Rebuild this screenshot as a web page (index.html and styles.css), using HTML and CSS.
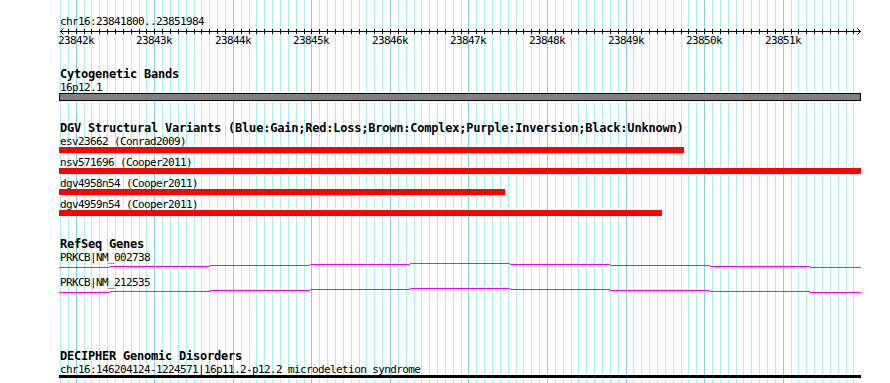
FILE: index.html
```html
<!DOCTYPE html>
<html lang="en">
<head>
<meta charset="UTF-8">
<title>chr16:23841800..23851984</title>
<link rel="stylesheet" href="styles.css">
</head>
<body>
<div class="page">
    <svg class="grid" id="grid" width="890" height="383"></svg>
    <div class="tracks">
        <div class="ruler">
            <div class="label">chr16:23841800..23851984</div>
            <svg class="axis" id="axis" width="803" height="6">
                <rect x="1" y="4" width="801" height="1" fill="#000"/>
                <path d="M1.5 4.5L4.5 1.5M1.5 4.5L4.5 7.5M801.5 4.5L798.5 1.5M801.5 4.5L798.5 7.5" stroke="#000" stroke-width="1" fill="none"/>
            </svg>
            <div class="ticks" id="ticks"></div>
        </div>

        <div class="track">
            <div class="title">Cytogenetic Bands</div>
            <div class="label">16p12.1</div>
            <div class="band"></div>
        </div>

        <div class="track">
            <div class="title">DGV Structural Variants (Blue:Gain;Red:Loss;Brown:Complex;Purple:Inversion;Black:Unknown)</div>
            <div class="features">
                <div class="feature">
                    <div class="label">esv23662 (Conrad2009)</div>
                    <div class="bar" style="width:625px"></div>
                </div>
                <div class="feature">
                    <div class="label">nsv571696 (Cooper2011)</div>
                    <div class="bar" style="width:802px"></div>
                </div>
                <div class="feature">
                    <div class="label">dgv4958n54 (Cooper2011)</div>
                    <div class="bar" style="width:446px"></div>
                </div>
                <div class="feature">
                    <div class="label">dgv4959n54 (Cooper2011)</div>
                    <div class="bar" style="width:603px"></div>
                </div>
            </div>
        </div>

        <div class="track genes">
            <div class="title">RefSeq Genes</div>
            <div class="features">
                <div class="feature">
                    <div class="label">PRKCB|NM_002738</div>
                    <svg class="hat" width="803" height="5"><path d="M0 4.5H51M51 3.5H151M151 2.5H251M251 1.5H351M351 .5H451M451 1.5H551M551 2.5H651M651 3.5H751M751 4.5H802"/></svg>
                </div>
                <div class="feature">
                    <div class="label">PRKCB|NM_212535</div>
                    <svg class="hat" width="803" height="5"><path d="M0 4.5H51M51 3.5H151M151 2.5H251M251 1.5H351M351 .5H451M451 1.5H551M551 2.5H651M651 3.5H751M751 4.5H802"/></svg>
                </div>
            </div>
        </div>

        <div class="track decipher">
            <div class="title">DECIPHER Genomic Disorders</div>
            <div class="label">chr16:146204124-1224571|16p11.2-p12.2 microdeletion syndrome</div>
            <div class="block"></div>
        </div>
    </div>
</div>
<script src="script.js"></script>
</body>
</html>
```

FILE: styles.css
```css
*{margin: 0; padding: 0;}
body{background: #fff;}
.page{
    position: relative;
    width: 890px;
    height: 383px;
    overflow: hidden;
    font-family: "DejaVu Sans Mono", monospace;
    color: #000;
}
.grid{
    position: absolute;
    left: 0;
    top: 0;
}
.tracks{
    position: relative;
    margin-left: 59px;
    width: 803px;
    display: flex;
    flex-direction: column;
}
.ruler{
    padding-top: 14px;
    height: 33px;
}
.label{
    font-size: 11px;
    line-height: 13px;
    height: 12px;
    padding-top: 1px;
    letter-spacing: -0.62px;
    padding-left: 1px;
    white-space: nowrap;
}
.title{
    font-size: 12px;
    font-weight: bold;
    line-height: 13px;
    height: 12px;
    padding-top: 1px;
    letter-spacing: -0.22px;
    padding-left: 1px;
    white-space: nowrap;
}
.axis{
    display: block;
    overflow: visible;
}
.ticks{
    position: relative;
    height: 13px;
}
.ticks .tick{
    position: absolute;
    top: 1px;
    width: 36px;
    font-size: 11px;
    line-height: 13px;
    letter-spacing: -0.62px;
    white-space: nowrap;
}
.track{
    margin-top: 20px;
}
.band{
    width: 802px;
    height: 8px;
    box-sizing: border-box;
    border: 1px solid #000;
    background: #808080;
}
.features{
    display: flex;
    flex-direction: column;
    gap: 2px;
}
.bar{
    height: 6px;
    background: #f00;
}
.genes{
    margin-top: 21px;
}
.genes .features{
    gap: 7px;
}
.hat{
    display: block;
}
.hat path{
    stroke: #f0f;
    stroke-width: 1;
    fill: none;
}
.decipher{
    margin-top: 56px;
}
.block{
    width: 802px;
    height: 3px;
    background: #000;
}
```

FILE: script.js
```js
var start = 23841800;
var end = 23851984;
var scale = 0.078556;//每个碱基的像素宽度

function xpos(bp){
    return Math.floor(60.5 + (bp - start) * scale);
}

// 1.背景网格
var grid = document.getElementById('grid');
var html = '';
for (var bp = start; bp <= end; bp += 100) {
    var major = bp % 1000 == 0;
    html += '<rect x="' + xpos(bp) + '" y="0" width="1" height="383" fill="' + (major ? '#87ceeb' : '#afeeee') + '"/>';
}
grid.innerHTML = html;

// 2.刻度
var axis = document.getElementById('axis');
var ticks = '';
for (var bp = start + 100; bp <= end; bp += 100) {
    ticks += '<rect x="' + (xpos(bp) - 59) + '" y="2" width="1" height="5" fill="#000"/>';
}
axis.insertAdjacentHTML('beforeend', ticks);

// 3.刻度文字
var box = document.getElementById('ticks');
for (var k = 23842; k * 1000 <= end; k++) {
    var d = document.createElement('div');
    d.className = 'tick';
    d.style.left = (xpos(k * 1000) - 59 - 18) + 'px';
    d.textContent = k + 'k';
    box.appendChild(d);
}
```
